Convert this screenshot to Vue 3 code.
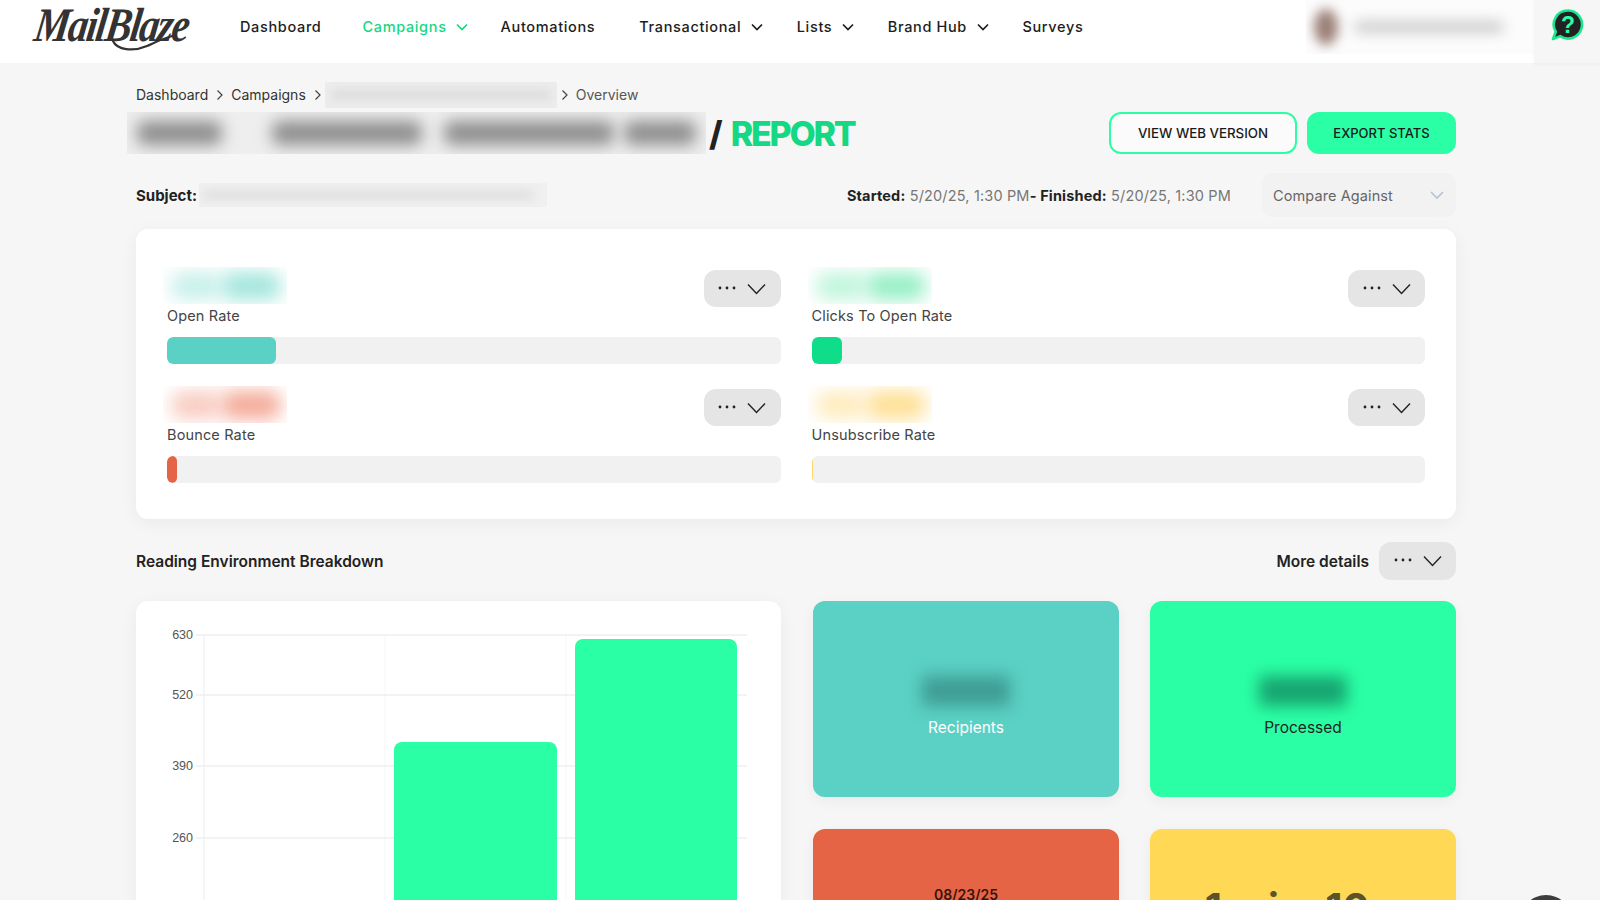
<template>
  <div class="page">
    <header class="topbar">
      <div class="logo">
        <span class="logo-text">MailBlaze</span>
        <svg class="logo-swoosh" width="70" height="22" viewBox="0 0 70 22">
          <path d="M3 8c4 9 20 11 34 5 9-4 16-8 29-11" fill="none" stroke="#333" stroke-width="2.2" stroke-linecap="round" />
        </svg>
      </div>
      <nav class="nav">
        <a
          v-for="item in navItems"
          :key="item.label"
          :class="['nav-item', { active: item.active, 'has-caret': item.caret }]"
        >
          {{ item.label }}
          <svg v-if="item.caret" width="12" height="8" viewBox="0 0 12 8">
            <path d="M1 1.5l5 5 5-5" fill="none" stroke="currentColor" stroke-width="1.7" />
          </svg>
        </a>
      </nav>
      <div class="user-blur">
        <span class="user-photo"></span>
        <span class="user-name"></span>
      </div>
      <div class="help">
        <svg width="34" height="34" viewBox="0 0 34 34">
          <path d="M18 2.5a14 14 0 1 1-7.800 25.600L3 31l2.800-7.200A14 14 0 0 1 18 2.500z" fill="#222" stroke="#19e68c" stroke-width="2.6" stroke-linejoin="round" />
          <text x="18" y="25" text-anchor="middle" class="help-mark">?</text>
        </svg>
      </div>
    </header>

    <main class="content">
      <div class="breadcrumb">
        <span>Dashboard</span>
        <svg class="crumb-sep" width="8" height="12" viewBox="0 0 8 12"><path d="M1.5 1.5L6 6l-4.500 4.500" fill="none" stroke="#444" stroke-width="1.2" /></svg>
        <span>Campaigns</span>
        <svg class="crumb-sep short" width="8" height="12" viewBox="0 0 8 12"><path d="M1.5 1.5L6 6l-4.500 4.500" fill="none" stroke="#444" stroke-width="1.2" /></svg>
        <span class="crumb-blur"><i></i></span>
        <svg class="crumb-sep" width="8" height="12" viewBox="0 0 8 12"><path d="M1.5 1.500L6 6l-4.500 4.500" fill="none" stroke="#444" stroke-width="1.2" /></svg>
        <span class="crumb-last">Overview</span>
      </div>

      <div class="title-row">
        <div class="title-blur">
          <i
            v-for="blob in titleBlobs"
            :key="blob.left"
            :style="{ width: blob.width + 'px', marginLeft: blob.left + 'px' }"
          ></i>
        </div>
        <h1 class="title"><span class="slash">/</span> <span class="report">REPORT</span></h1>
        <div class="title-actions">
          <button class="btn btn-outline">VIEW WEB VERSION</button>
          <button class="btn btn-solid">EXPORT STATS</button>
        </div>
      </div>

      <div class="subject-row">
        <strong class="subject-label">Subject:</strong>
        <span class="subject-blur"><i></i></span>
        <div class="dates">
          <strong>Started:</strong> 5/20/25, 1:30 PM<strong>- Finished:</strong> 5/20/25, 1:30 PM
        </div>
        <div class="compare">
          <span>Compare Against</span>
          <svg width="16" height="10" viewBox="0 0 16 10"><path d="M2 2l6 6 6-6" fill="none" stroke="#b4c2d2" stroke-width="1.6" /></svg>
        </div>
      </div>

      <section class="card metrics">
        <div v-for="m in metrics" :key="m.label" class="metric">
          <div class="metric-head">
            <div>
              <div class="metric-blur" :class="m.key"><i></i><i></i></div>
              <div class="metric-label">{{ m.label }}</div>
            </div>
            <button class="more-btn">
              <svg width="50" height="14" viewBox="0 0 50 14">
                <circle cx="3" cy="6" r="1.4" fill="#222" />
                <circle cx="10" cy="6" r="1.4" fill="#222" />
                <circle cx="17" cy="6" r="1.4" fill="#222" />
                <path d="M31 2.500l8.500 9 8.500-9" fill="none" stroke="#222" stroke-width="1.4" />
              </svg>
            </button>
          </div>
          <div class="bar-track">
            <div class="bar-fill" :style="{ width: m.width, background: m.color }"></div>
          </div>
        </div>
      </section>

      <div class="section-head">
        <h2>Reading Environment Breakdown</h2>
        <div class="section-more">
          <strong>More details</strong>
          <button class="more-btn">
            <svg width="50" height="14" viewBox="0 0 50 14">
              <circle cx="3" cy="6" r="1.4" fill="#222" />
              <circle cx="10" cy="6" r="1.4" fill="#222" />
              <circle cx="17" cy="6" r="1.4" fill="#222" />
              <path d="M31 2.500l8.500 9 8.500-9" fill="none" stroke="#222" stroke-width="1.4" />
            </svg>
          </button>
        </div>
      </div>

      <div class="lower">
        <section class="card chart-card">
          <svg width="645" height="400" viewBox="0 0 645 400">
            <line x1="68" x2="68" y1="34" y2="400" stroke="#ececec" />
            <line v-for="x in [249, 430]" :key="x" :x1="x" :x2="x" y1="34" y2="400" stroke="#f6f6f6" />
            <g v-for="t in ticks" :key="t.label">
              <line x1="60" x2="611" :y1="t.y" :y2="t.y" stroke="#e8e8e8" stroke-width="1.2" />
              <text x="57" :y="t.y + 4" text-anchor="end" class="tick">{{ t.label }}</text>
            </g>
            <path d="M258 400V149a8 8 0 0 1 8-8h147a8 8 0 0 1 8 8v251z" fill="#2affa5" />
            <path d="M439 400V46a8 8 0 0 1 8-8h146a8 8 0 0 1 8 8v354z" fill="#2affa5" />
          </svg>
        </section>

        <div class="tiles">
          <div class="tile teal">
            <div class="tile-blur dark"><i></i></div>
            <div class="tile-label">Recipients</div>
          </div>
          <div class="tile green">
            <div class="tile-blur greenish"><i></i></div>
            <div class="tile-label">Processed</div>
          </div>
          <div class="tile red">
            <div class="tile-date">08/23/25</div>
          </div>
          <div class="tile yellow">
            <div class="tile-big">1 min, 10 s</div>
          </div>
        </div>
      </div>
    </main>

    <div class="chat-bubble"></div>
  </div>
</template>

<script setup>
const navItems = [
  { label: 'Dashboard' },
  { label: 'Campaigns', active: true, caret: true },
  { label: 'Automations' },
  { label: 'Transactional', caret: true },
  { label: 'Lists', caret: true },
  { label: 'Brand Hub', caret: true },
  { label: 'Surveys' }
]

const titleBlobs = [
  { left: 10, width: 85 },
  { left: 50, width: 150 },
  { left: 22, width: 170 },
  { left: 10, width: 72 }
]

const metrics = [
  { key: 'teal', label: 'Open Rate', width: '17.8%', color: '#5bd0c4' },
  { key: 'mint', label: 'Clicks To Open Rate', width: '4.9%', color: '#0fdd8a' },
  { key: 'coral', label: 'Bounce Rate', width: '1.6%', color: '#e66446' },
  { key: 'sun', label: 'Unsubscribe Rate', width: '0.2%', color: '#ffd966' }
]

const ticks = [
  { label: '630', y: 34 },
  { label: '520', y: 94 },
  { label: '390', y: 165 },
  { label: '260', y: 237 }
]
</script>

<style>
html,
body {
  margin: 0;
  background: #f6f6f6;
  overflow: hidden;
}
</style>

<style scoped>
.page {
  position: relative;
  height: 900px;
  overflow: hidden;
  background: #f6f6f6;
  font-family: Inter, "Open Sans", "Liberation Sans", sans-serif;
  color: #222;
}

.topbar {
  display: flex;
  align-items: flex-start;
  height: 63px;
  background: #fff;
}

.logo {
  position: relative;
  width: 207px;
  height: 63px;
  flex-shrink: 0;
}

.logo-text {
  position: absolute;
  left: 35px;
  top: 0;
  font-family: "Liberation Serif", serif;
  font-style: italic;
  font-weight: 700;
  font-size: 48px;
  line-height: 50px;
  letter-spacing: -2px;
  color: #333;
  white-space: nowrap;
  transform: scaleX(0.83) skewX(-10deg);
  transform-origin: left center;
}

.logo-swoosh {
  position: absolute;
  left: 110px;
  top: 33px;
}

.nav {
  display: flex;
  align-items: center;
  height: 53px;
  padding-left: 33px;
  flex: 1;
}

.nav-item {
  display: flex;
  align-items: center;
  gap: 10px;
  margin-right: 41px;
  font-size: 14.5px;
  font-weight: 500;
  letter-spacing: 0.65px;
  color: #1d1d1d;
  white-space: nowrap;
}

.nav-item.has-caret {
  margin-right: 33.5px;
}

.nav-item.active {
  gap: 9px;
  margin-right: 33px;
  color: #14d884;
}

.nav-item:nth-child(3) {
  margin-right: 44px;
}

.user-blur {
  display: flex;
  align-items: center;
  width: 228px;
  height: 54px;
  overflow: hidden;
  background: #fcfcfc;
}

.user-photo {
  width: 24px;
  height: 36px;
  margin-left: 8px;
  border-radius: 50%;
  background: #9b8077;
  filter: blur(6px);
}

.user-name {
  width: 150px;
  height: 10px;
  margin-left: 16px;
  border-radius: 6px;
  background: #c4c4c4;
  filter: blur(7px);
}

.help {
  display: flex;
  justify-content: center;
  width: 66px;
  height: 63px;
  box-sizing: border-box;
  padding-top: 8px;
  background: #f6f6f6;
  box-shadow: 0 2px 3px rgba(0, 0, 0, 0.03);
}

.help-mark {
  font-family: "Liberation Sans", sans-serif;
  font-size: 23px;
  font-weight: 700;
  fill: #2affa5;
}

.content {
  padding: 0 144px 0 136px;
}

.breadcrumb {
  display: flex;
  align-items: center;
  height: 29px;
  margin-top: 17px;
  font-size: 14px;
  color: #333;
}

.crumb-sep {
  margin: 0 7px 0 8px;
}

.crumb-sep.short {
  margin-right: 3px;
}

.crumb-blur {
  width: 232px;
  height: 26px;
  margin-right: -4px;
  overflow: hidden;
  background: #ededed;
}

.crumb-blur i {
  display: block;
  width: 220px;
  height: 10px;
  margin: 8px 6px;
  background: #dcdcdc;
  filter: blur(5px);
}

.crumb-last {
  color: #555;
}

.title-row {
  display: flex;
  align-items: center;
  height: 42px;
  margin-top: 3px;
}

.title-blur {
  display: flex;
  align-items: center;
  width: 579px;
  height: 42px;
  margin-left: -9px;
  box-sizing: border-box;
  overflow: hidden;
  background: #eeeeee;
}

.title-blur i {
  flex-shrink: 0;
  height: 24px;
  border-radius: 8px;
  background: #8e8e8e;
  filter: blur(8px);
}

.title {
  margin: 0 0 0 3px;
  font-size: 34px;
  font-weight: 800;
  letter-spacing: -2.2px;
  word-spacing: 5px;
  white-space: nowrap;
}

.slash {
  color: #222;
}

.report {
  color: #14d884;
}

.title-actions {
  display: flex;
  gap: 10px;
  margin-left: auto;
}

.btn {
  height: 42px;
  box-sizing: border-box;
  border-radius: 12px;
  font-family: inherit;
  font-size: 13.3px;
  font-weight: 500;
  color: #1a1a1a;
}

.btn-outline {
  width: 188px;
  background: #fbfbfb;
  border: 2px solid #2affa5;
}

.btn-solid {
  width: 149px;
  background: #2affa5;
  border: 0;
  font-size: 13px;
}

.subject-row {
  display: flex;
  align-items: center;
  height: 44px;
  margin-top: 19px;
  font-size: 15px;
}

.subject-label {
  font-weight: 700;
  margin-right: 2px;
}

.subject-blur {
  width: 348px;
  height: 24px;
  overflow: hidden;
  background: #f0f0f0;
}

.subject-blur i {
  display: block;
  width: 330px;
  height: 10px;
  margin: 7px 4px;
  background: #e0e0e0;
  filter: blur(5px);
}

.dates {
  margin-left: auto;
  margin-right: 31px;
  font-size: 14.5px;
  letter-spacing: 0.16px;
  color: #777;
}

.dates strong {
  font-weight: 700;
  color: #222;
}

.compare {
  display: flex;
  align-items: center;
  justify-content: space-between;
  width: 194px;
  height: 44px;
  box-sizing: border-box;
  padding: 0 11px;
  border-radius: 10px;
  background: #f2f2f2;
  font-size: 14.5px;
  letter-spacing: 0.1px;
  color: #666;
}

.card {
  background: #fff;
  border-radius: 12px;
  box-shadow: 0 4px 18px rgba(0, 0, 0, 0.05);
}

.metrics {
  display: grid;
  grid-template-columns: 1fr 1fr;
  align-content: start;
  column-gap: 31px;
  row-gap: 22px;
  height: 290px;
  box-sizing: border-box;
  margin-top: 12px;
  padding: 38px 31px 0;
}

.metric-head {
  display: flex;
  align-items: flex-start;
  justify-content: space-between;
}

.metric-blur {
  display: flex;
  align-items: center;
  width: 124px;
  height: 37px;
  margin-left: -4px;
  overflow: hidden;
}

.metric-blur i {
  display: block;
  height: 28px;
  border-radius: 12px;
  filter: blur(9px);
}

.metric-blur i:first-child {
  width: 50px;
  margin-left: 8px;
  opacity: 0.6;
}

.metric-blur i:last-child {
  width: 60px;
}

.metric-blur.teal i {
  background: #a4e6dd;
}

.metric-blur.mint i {
  background: #97efc6;
}

.metric-blur.coral i {
  background: #f4ab99;
}

.metric-blur.sun i {
  background: #fee094;
}

.metric-label {
  margin-top: 2px;
  font-size: 14.5px;
  line-height: 20px;
  letter-spacing: 0.15px;
  color: #444;
}

.more-btn {
  display: flex;
  align-items: center;
  justify-content: center;
  width: 77px;
  height: 37px;
  margin-top: 3px;
  padding: 0;
  border: 0;
  border-radius: 12px;
  background: #e5e5e5;
}

.bar-track {
  height: 27px;
  margin-top: 11px;
  overflow: hidden;
  border-radius: 6px;
  background: #f1f1f1;
}

.bar-fill {
  height: 100%;
  border-radius: 6px;
}

.section-head {
  display: flex;
  align-items: center;
  justify-content: space-between;
  height: 38px;
  margin-top: 23px;
}

.section-head h2 {
  margin: 0;
  font-size: 15.5px;
  font-weight: 600;
}

.section-more {
  display: flex;
  align-items: center;
  gap: 10px;
  font-size: 15.5px;
}

.section-more strong {
  font-weight: 600;
}

.section-more .more-btn {
  margin-top: 0;
  height: 38px;
}

.lower {
  display: flex;
  gap: 32px;
  margin-top: 21px;
}

.chart-card {
  flex: 0 0 645px;
  height: 420px;
}

.chart-card svg {
  display: block;
}

.tick {
  font-family: "Liberation Sans", sans-serif;
  font-size: 12.5px;
  fill: #555;
}

.tiles {
  display: grid;
  grid-template-columns: 306px 306px;
  grid-auto-rows: 196px;
  column-gap: 31px;
  row-gap: 32px;
}

.tile {
  display: flex;
  flex-direction: column;
  align-items: center;
  border-radius: 12px;
  box-shadow: 0 4px 14px rgba(0, 0, 0, 0.05);
}

.tile.teal {
  background: #5bd0c4;
  color: #fff;
}

.tile.green {
  background: #2affa5;
  color: #222;
}

.tile.red {
  background: #e66446;
  color: #3a1208;
}

.tile.yellow {
  background: #ffd955;
  color: #5c5428;
}

.tile-blur {
  width: 110px;
  height: 52px;
  margin-top: 64px;
}

.tile-blur i {
  display: block;
  width: 88px;
  height: 30px;
  margin: 11px auto;
  filter: blur(8px);
}

.tile-blur.dark i {
  background: #3f9d95;
}

.tile-blur.greenish i {
  background: #17a570;
}

.tile-label {
  margin-top: 1px;
  font-size: 15.5px;
}

.tile-date {
  margin-top: 57px;
  font-size: 14px;
  font-weight: 600;
}

.tile-big {
  margin-top: 54px;
  font-size: 40px;
  font-weight: 700;
  white-space: nowrap;
}

.chat-bubble {
  position: absolute;
  left: 1520px;
  top: 895px;
  width: 52px;
  height: 52px;
  border-radius: 50%;
  background: #3d3d3d;
}
</style>
